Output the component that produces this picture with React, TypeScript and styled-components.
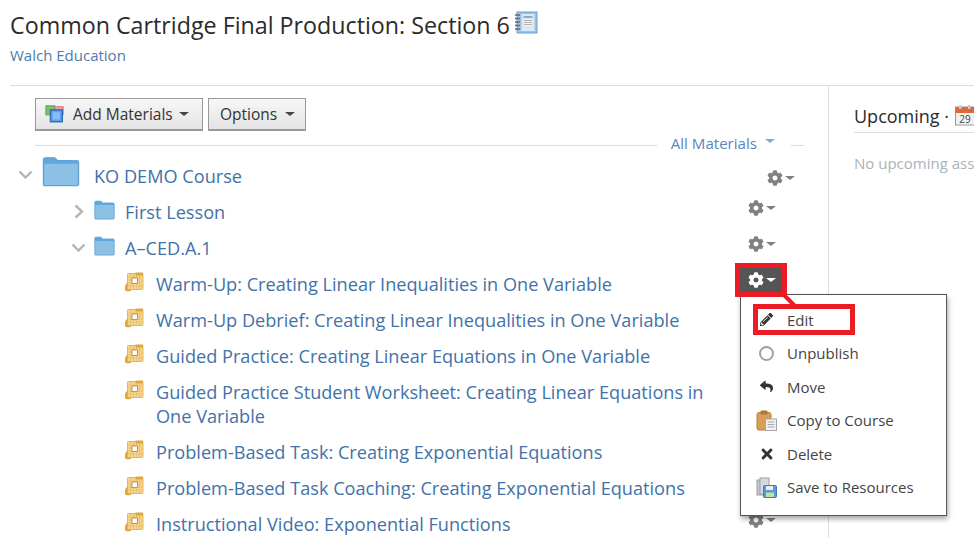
import React from "react";
import styled, { createGlobalStyle } from "styled-components";
import { FaCog, FaPencilAlt, FaReply, FaTimes } from "react-icons/fa";

const Global = createGlobalStyle`
  html, body { margin: 0; padding: 0; background: #fff; width: 974px; height: 538px; overflow: hidden; }
  body { font-family: "Open Sans", "Liberation Sans", sans-serif; }
  * { box-sizing: border-box; }
`;

const Page = styled.div`
  width: 974px;
  height: 538px;
  overflow: hidden;
  position: relative;
`;

const Header = styled.header`
  height: 86px;
  margin-left: 10px;
  padding-top: 9px;
  border-bottom: 1px solid #ddd;
`;

const Title = styled.h1`
  margin: 0;
  display: flex;
  align-items: flex-start;
  font-size: 23.25px;
  line-height: 33px;
  font-weight: 400;
  color: #2b2b2b;
`;

const Owner = styled.a`
  display: block;
  margin-top: 3px;
  font-size: 15px;
  line-height: 20px;
  color: #4f7cac;
`;

const Columns = styled.div`
  display: flex;
  height: 452px;
`;

const Main = styled.main`
  width: 819px;
  margin-left: 10px;
  flex: none;
  border-right: 1px solid #ddd;
  padding: 12px 0 0 0;
`;

const Toolbar = styled.div`
  display: flex;
  gap: 5px;
  padding-left: 25px;
`;

const Button = styled.button<{ $w: number; $pad: number; $gap: number }>`
  height: 33px;
  display: flex;
  align-items: center;
  gap: ${(p) => p.$gap}px;
  padding: 0 0 0 ${(p) => p.$pad}px;
  width: ${(p) => p.$w}px;
  border: 1px solid #999;
  border-bottom-width: 2px;
  background: linear-gradient(#f7f7f7, #e4e4e4);
  font-family: inherit;
  font-size: 15.5px;
  color: #333;
`;

const Caret = styled.span<{ $c?: string; $s?: number }>`
  display: inline-block;
  width: 0;
  height: 0;
  border-left: ${(p) => p.$s ?? 4.5}px solid transparent;
  border-right: ${(p) => p.$s ?? 4.5}px solid transparent;
  border-top: ${(p) => (p.$s ?? 4.5) - 0.5}px solid ${(p) => p.$c ?? "#444"};
`;

const FilterBar = styled.div`
  display: flex;
  align-items: center;
  margin: 4px 24px 0 25px;
  height: 20px;
`;

const Rule = styled.div<{ $w?: number }>`
  height: 1px;
  background: #ddd;
  flex: ${(p) => (p.$w ? `0 0 ${p.$w}px` : "1")};
`;

const Filter = styled.a`
  display: flex;
  align-items: center;
  font-size: 15.1px;
  color: #5b86b8;
  margin: 0 16px 4px 14px;
  gap: 8px;
`;

const FilterCaret = styled(Caret)`
  margin-top: -5px;
`;

const Tree = styled.div`
  margin-top: 3px;
  padding-right: 26px;
`;

const Children = styled.div`
  padding-right: 19px;
`;

const Row = styled.div<{ $level: number }>`
  display: flex;
  align-items: flex-start;
  padding: 6px 0 6px ${(p) => [8, 61, 115][p.$level]}px;
  min-height: 36px;
`;

const Chevron = styled.svg<{ $level: number }>`
  flex: none;
  width: 15px;
  height: 15px;
  margin-top: ${(p) => (p.$level === 0 ? 3 : 4)}px;
  margin-right: ${(p) => (p.$level === 0 ? 9 : 8)}px;
`;

const BigFolder = styled.svg`
  flex: none;
  width: 38px;
  height: 31px;
  margin: -8px 14px 0 0;
`;

const SmallFolder = styled.svg`
  flex: none;
  width: 21px;
  height: 20px;
  margin: 0 10px 0 0;
`;

const Doc = styled.svg`
  flex: none;
  width: 19px;
  height: 20px;
  margin: 0 12px 0 0;
`;

const Name = styled.a`
  flex: 1;
  font-size: 18.15px;
  line-height: 24px;
  color: #4272a8;
  font-weight: 500;
  padding-right: 20px;
`;

const GearCell = styled.div<{ $level: number }>`
  position: relative;
  flex: none;
  width: 43px;
  height: 24px;
  margin-top: ${(p) => (p.$level === 0 ? 2 : -4)}px;
  margin-bottom: ${(p) => (p.$level === 0 ? -2 : 0)}px;
`;

const GearButton = styled.div<{ $active?: boolean }>`
  width: 43px;
  height: 24px;
  display: flex;
  align-items: center;
  justify-content: center;
  gap: 2px;
  background: ${(p) => (p.$active ? "#555" : "transparent")};
  color: ${(p) => (p.$active ? "#fff" : "#808080")};
  font-size: 16px;
`;

const Menu = styled.div`
  position: absolute;
  z-index: 3;
  left: 0;
  top: 26px;
  width: 207px;
  height: 222px;
  background: #fff;
  border: 1px solid #555;
  box-shadow: 1px 3px 5px rgba(0, 0, 0, 0.35);
  padding-top: 8px;
  display: flex;
  flex-direction: column;
`;

const Item = styled.div`
  height: 33.5px;
  display: flex;
  align-items: center;
  font-size: 15px;
  color: #444;
`;

const ItemIcon = styled.span`
  flex: none;
  width: 46px;
  padding-left: 5px;
  display: flex;
  align-items: center;
  justify-content: center;
  color: #333;
  font-size: 13px;
`;

const Ring = styled.span`
  width: 15px;
  height: 15px;
  border-radius: 50%;
  border: 2.5px solid #9aa3ad;
`;

const RedBox = styled.div`
  position: absolute;
  z-index: 4;
  left: -5px;
  top: -5px;
  width: 52px;
  height: 34px;
  border: 5px solid #ed1c24;
`;

const RedBoxEdit = styled.div`
  position: absolute;
  z-index: 4;
  left: 13px;
  top: 36px;
  width: 102px;
  height: 31px;
  border: 5px solid #ed1c24;
`;

const RedLink = styled.svg`
  position: absolute;
  z-index: 4;
  left: 40px;
  top: 25px;
  width: 20px;
  height: 16px;
`;

const Side = styled.aside`
  width: 146px;
  flex: none;
  padding: 13px 0 0 25px;
  overflow: hidden;
`;

const SideHead = styled.div`
  display: flex;
  align-items: center;
  gap: 6px;
  width: 200px;
  height: 34px;
  border-bottom: 1px solid #ddd;
  font-size: 18px;
  color: #2b2b2b;
  white-space: nowrap;
`;

const Empty = styled.div`
  margin-top: 20px;
  width: 220px;
  font-size: 15px;
  line-height: 20px;
  color: #aab2bb;
  white-space: nowrap;
`;

const NotebookIcon = styled.svg`
  width: 24px;
  height: 24px;
  margin: 2px 0 0 4px;
`;

const Layers = styled.svg`
  width: 20px;
  height: 20px;
  flex: none;
  margin-right: 2px;
`;

const Cal = styled.svg`
  width: 20px;
  height: 21px;
  flex: none;
  margin-top: -1px;
`;

const ColorIcon = styled.svg`
  width: 21px;
  height: 21px;
  flex: none;
`;

const FolderArt = () => (
  <>
    <path d="M1.5 31V4a2 2 0 0 1 2-2h9l3 3h19a2 2 0 0 1 2 2v24a1.5 1.5 0 0 1-1.5 1.5H3A1.5 1.5 0 0 1 1.5 31Z" fill="#8cc0e4" stroke="#5da0d6" strokeWidth="1.4" />
    <path d="M1.5 8.5V4a2 2 0 0 1 2-2h9l3 3h19a2 2 0 0 1 2 2v1.5Z" fill="#5fa8dd" />
  </>
);

const Big = () => (
  <BigFolder viewBox="0 0 38 34" preserveAspectRatio="none"><FolderArt /></BigFolder>
);
const Small = () => (
  <SmallFolder viewBox="0 0 38 34" preserveAspectRatio="none"><FolderArt /></SmallFolder>
);

const ChevDown = ({ level }: { level: number }) => (
  <Chevron $level={level} viewBox="0 0 15 15">
    <path d="M1.5 4.5 7.5 10.5 13.5 4.5" fill="none" stroke="#b5b5b5" strokeWidth="2.4" />
  </Chevron>
);
const ChevRight = ({ level }: { level: number }) => (
  <Chevron $level={level} viewBox="0 0 15 15">
    <path d="M4.5 1.5 11 7.5 4.5 13.5" fill="none" stroke="#b5b5b5" strokeWidth="2.4" />
  </Chevron>
);

const DocIcon = () => (
  <Doc viewBox="0 0 19 20">
    <rect x="2.5" y="1.5" width="15.5" height="16" rx="1" fill="#f4d68f" stroke="#e6b557" />
    <path d="M5.5 2v15M8.5 2v15M11.5 2v15M14.5 2v15M3 5h14.5M3 8h14.5M3 11h14.5M3 14h14.5" stroke="#e8bd68" strokeWidth=".7" />
    <path d="M10.5 0.5h7.5v3h-7.5Z" fill="#dfa63f" />
    <path d="M0 15c0-2 1-3.5 2.5-4v5.5c0 .8.5 1 1 1h3c-.3 1.2-1 1.8-2 1.8H2c-1.2 0-2-.8-2-2Z" fill="#dfa63f" />
    <rect x="7" y="6" width="5.5" height="5.5" fill="#fff" stroke="#a98538" strokeWidth=".8" />
  </Doc>
);

const Gear = ({ active, level = 1 }: { active?: boolean; level?: number }) => (
  <GearCell $level={level}>
    <GearButton $active={active}>
      <FaCog />
      <Caret $c={active ? "#fff" : "#808080"} $s={5} />
    </GearButton>
    {active && (
      <>
        <RedBox />
        <RedLink viewBox="0 0 20 16">
          <path d="M3 1 16 14" stroke="#ed1c24" strokeWidth="4" />
        </RedLink>
        <RedBoxEdit />
        <Menu>
          {items.map(([icon, label]) => (
            <Item key={label}>
              <ItemIcon>{icon}</ItemIcon>
              {label}
            </Item>
          ))}
        </Menu>
      </>
    )}
  </GearCell>
);

const Clipboard = () => (
  <ColorIcon viewBox="0 0 21 21">
    <rect x="1" y="2.5" width="14" height="17.5" rx="2" fill="#d6a058" stroke="#b57f35" />
    <rect x="4.5" y=".5" width="7" height="4" rx="1" fill="#a87a3a" />
    <rect x="9.5" y="9" width="11" height="11.5" fill="#f3f3f3" stroke="#a5a5a5" />
    <path d="M11.5 12h7M11.5 14.5h7M11.5 17h7" stroke="#a5a5a5" />
  </ColorIcon>
);

const SaveRes = () => (
  <ColorIcon viewBox="0 0 21 21">
    <rect x="1" y="3" width="9" height="15" fill="#c3c8cd" stroke="#9aa0a6" />
    <rect x="4" y="1" width="9" height="16" fill="#d8dbde" stroke="#9aa0a6" />
    <rect x="7.5" y="8.5" width="13" height="12" rx="1" fill="#5e97d6" stroke="#4477b0" />
    <rect x="10" y="9" width="7" height="4" fill="#e9eef5" />
    <rect x="10" y="15.5" width="8" height="4.5" fill="#bfe3a5" />
  </ColorIcon>
);

const items: [React.ReactNode, string][] = [
  [<FaPencilAlt key="e" />, "Edit"],
  [<Ring key="u" />, "Unpublish"],
  [<FaReply key="m" />, "Move"],
  [<Clipboard key="c" />, "Copy to Course"],
  [<FaTimes key="d" size={16} />, "Delete"],
  [<SaveRes key="s" />, "Save to Resources"],
];

const lessons = [
  "Warm-Up: Creating Linear Inequalities in One Variable",
  "Warm-Up Debrief: Creating Linear Inequalities in One Variable",
  "Guided Practice: Creating Linear Equations in One Variable",
  "Guided Practice Student Worksheet: Creating Linear Equations in One Variable",
  "Problem-Based Task: Creating Exponential Equations",
  "Problem-Based Task Coaching: Creating Exponential Equations",
  "Instructional Video: Exponential Functions",
];

export default function App() {
  return (
    <Page>
      <Global />
      <Header>
        <Title>
          Common Cartridge Final Production: Section 6
          <NotebookIcon viewBox="0 0 24 24">
            <rect x="3" y="1" width="20" height="21" fill="#9cc3e6" stroke="#6da0d0" />
            <rect x="7.5" y="3" width="13" height="17" fill="#dbe8f5" />
            <path d="M9.5 6h9" stroke="#6a93bb" strokeWidth="1.4" />
            <rect x="9.5" y="8" width="9" height="7" fill="#f2f2f2" />
            <path d="M10 9.5h8M10 11.5h8M10 13.5h8" stroke="#b0b0b0" />
            <path d="M1 4h5M1 7.5h5M1 11h5M1 14.5h5M1 18h5" stroke="#666" strokeWidth="1.6" />
          </NotebookIcon>
        </Title>
        <Owner>Walch Education</Owner>
      </Header>
      <Columns>
        <Main>
          <Toolbar>
            <Button $w={168} $pad={9} $gap={6}>
              <Layers viewBox="0 0 22 20">
                <rect x="1" y="1" width="10" height="10" fill="#7cc26e" stroke="#5a9a50" />
                <rect x="11" y="2" width="9" height="9" fill="#f0a0a0" stroke="#c77" />
                <rect x="6" y="5.5" width="13" height="13" fill="#5f9ff0" stroke="#2e6fb8" strokeWidth="1.6" />
                <rect x="8.5" y="8" width="8" height="8" fill="#8bbcf5" />
              </Layers>
              Add Materials
              <Caret $s={5} />
            </Button>
            <Button $w={98} $pad={11} $gap={8}>
              Options
              <Caret $s={5} />
            </Button>
          </Toolbar>
          <FilterBar>
            <Rule />
            <Filter>
              All Materials
              <FilterCaret $c="#8aa8cc" $s={5} />
            </Filter>
            <Rule $w={13} />
          </FilterBar>
          <Tree>
            <Row $level={0}>
              <ChevDown level={0} />
              <Big />
              <Name>KO DEMO Course</Name>
              <Gear level={0} />
            </Row>
            <Children>
              <Row $level={1}>
                <ChevRight level={1} />
                <Small />
                <Name>First Lesson</Name>
                <Gear />
              </Row>
              <Row $level={1}>
                <ChevDown level={1} />
                <Small />
                <Name>A–CED.A.1</Name>
                <Gear />
              </Row>
              {lessons.map((l, i) => (
                <Row $level={2} key={l}>
                  <DocIcon />
                  <Name>{l}</Name>
                  <Gear active={i === 0} />
                </Row>
              ))}
            </Children>
          </Tree>
        </Main>
        <Side>
          <SideHead>
            Upcoming ·
            <Cal viewBox="0 0 20 21">
              <rect x=".5" y="2" width="19" height="18" fill="#f1f1f1" stroke="#999" />
              <rect x=".5" y="2" width="19" height="6" fill="#e0663c" />
              <rect x="4" y="0" width="2.5" height="4" fill="#ccc" />
              <rect x="13" y="0" width="2.5" height="4" fill="#ccc" />
              <text x="10" y="17.5" fontSize="10" textAnchor="middle" fontFamily="Open Sans" fill="#444">29</text>
            </Cal>
          </SideHead>
          <Empty>No upcoming assignments</Empty>
        </Side>
      </Columns>
    </Page>
  );
}
